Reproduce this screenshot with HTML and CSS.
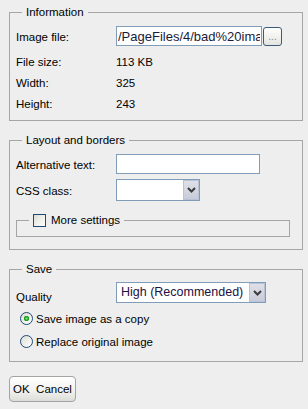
FILE: index.html
```html
<!DOCTYPE html>
<html lang="en">
  <head>
    <meta charset="UTF-8" />
    <meta name="viewport" content="width=device-width, initial-scale=1.0" />
    <title>Image properties</title>
    <link rel="stylesheet" href="styles.css">
  </head>
  <body>
    <div class="dialog">
      <fieldset class="group group-info">
        <legend>Information</legend>
        <div class="row row-control">
          <label class="label">Image file:</label>
          <div class="file-field">
            <input type="text" class="text-input file-input" value="/PageFiles/4/bad%20image.jpg" />
            <button class="browse-btn">...</button>
          </div>
        </div>
        <div class="info-list">
          <div class="row row-info"><span class="label">File size:</span><span class="value">113 KB</span></div>
          <div class="row row-info"><span class="label">Width:</span><span class="value">325</span></div>
          <div class="row row-info"><span class="label">Height:</span><span class="value">243</span></div>
        </div>
      </fieldset>

      <fieldset class="group group-layout">
        <legend>Layout and borders</legend>
        <div class="row row-control">
          <label class="label">Alternative text:</label>
          <input type="text" class="text-input alt-input" />
        </div>
        <div class="row row-control row-css">
          <label class="label">CSS class:</label>
          <div class="combo combo-css">
            <span class="combo-value"></span>
            <span class="combo-arrow">
              <svg width="9" height="6" viewBox="0 0 9 6"><path d="M1 1 L4.5 4.5 L8 1" fill="none" stroke="#3b3b3b" stroke-width="2" /></svg>
            </span>
          </div>
        </div>
        <fieldset class="subgroup">
          <legend class="check-legend">
            <input type="checkbox" class="check" />
            <span>More settings</span>
          </legend>
        </fieldset>
      </fieldset>

      <fieldset class="group group-save">
        <legend>Save</legend>
        <div class="row row-quality">
          <label class="label label-low">Quality</label>
          <div class="combo combo-quality">
            <span class="combo-value">High (Recommended)</span>
            <span class="combo-arrow">
              <svg width="9" height="6" viewBox="0 0 9 6"><path d="M1 1 L4.5 4.5 L8 1" fill="none" stroke="#3b3b3b" stroke-width="2" /></svg>
            </span>
          </div>
        </div>
        <div class="radio-list">
          <label class="radio-row"><input type="radio" name="save" class="radio" checked /><span>Save image as a copy</span></label>
          <label class="radio-row"><input type="radio" name="save" class="radio" /><span>Replace original image</span></label>
        </div>
      </fieldset>

      <button class="action-btn">OK&nbsp; Cancel</button>
    </div>
  </body>
</html>
```

FILE: styles.css
```css
body {
  margin: 0;
  padding: 0;
  background-color: #eeeeee;
  font-family: "Liberation Sans", Arial, sans-serif;
  font-size: 11.5px;
  color: #000;
}
.dialog {
  padding: 6px 5px 0 9px;
}
.group {
  margin: 0;
  border: 1px solid #a5a5a5;
  padding: 6px 6px 6px 6px;
  min-width: 0;
}
.group + .group {
  margin-top: 13px;
}
.group legend {
  padding: 0 4px;
  margin-left: 6px;
  line-height: 13px;
}
.row {
  display: grid;
  grid-template-columns: 100px auto;
  align-items: center;
}
.row-control {
  height: 22px;
}
.row-control + .row-control {
  margin-top: 4px;
}
.info-list {
  margin-top: 4px;
}
.row-info {
  height: 21px;
}
.label {
  line-height: 13px;
  padding-top: 2px;
}
.text-input {
  box-sizing: border-box;
  height: 20px;
  border: 1px solid #7f9db9;
  padding: 0 1px;
  margin: 0;
  background: #fff;
  font-family: "Liberation Sans", Arial, sans-serif;
  font-size: 13px;
  color: #1a1a3a;
  outline: none;
}
.file-field {
  display: flex;
  align-items: center;
  gap: 1px;
}
.file-input {
  width: 146px;
}
.alt-input {
  width: 144px;
}
.browse-btn {
  box-sizing: border-box;
  width: 19px;
  height: 19px;
  margin: 0;
  padding: 0 0 3px;
  border: 1px solid #3d5a7a;
  border-radius: 3px;
  background: linear-gradient(#ffffff, #e4e4e0);
  color: #8a8a8a;
  font-family: "Liberation Sans", Arial, sans-serif;
  font-size: 10px;
  line-height: 10px;
  display: flex;
  align-items: flex-end;
  justify-content: center;
}
.combo {
  box-sizing: border-box;
  display: flex;
  border: 1px solid #7f9db9;
  background: #fff;
}
.combo-css {
  width: 84px;
  height: 22px;
}
.combo-quality {
  width: 150px;
  height: 21px;
}
.combo-value {
  flex: 1;
  padding-left: 4px;
  font-size: 12.5px;
  line-height: 19px;
  color: #1c1040;
  white-space: nowrap;
  overflow: hidden;
}
.combo-arrow {
  box-sizing: border-box;
  width: 16px;
  border: 1px solid #b9c3d8;
  background: linear-gradient(#dfe0e8, #c8cbd8);
  display: flex;
  align-items: center;
  justify-content: center;
}
.subgroup {
  margin: 13px 6px 6px 0;
  border: 1px solid #a5a5a5;
  padding: 0 6px 9px;
  min-width: 0;
}
.check-legend {
  display: flex;
  align-items: center;
  gap: 5px;
  margin-left: 10px;
  padding: 0 4px;
  line-height: 13px;
}
.check {
  appearance: none;
  box-sizing: border-box;
  width: 13px;
  height: 13px;
  margin: 0;
  border: 1px solid #1f4a78;
  background: linear-gradient(135deg, #dcdcd6, #ffffff);
}
.group-save {
  padding-bottom: 8px;
}
.row-quality {
  height: 21px;
  align-items: end;
}
.label-low {
  padding-top: 0;
  margin-bottom: -1px;
}
.radio-list {
  margin-top: 4px;
}
.radio-row {
  display: flex;
  align-items: center;
  gap: 3px;
  height: 23px;
  padding-left: 4px;
}
.radio {
  appearance: none;
  box-sizing: border-box;
  width: 13px;
  height: 13px;
  margin: 0;
  border: 1px solid #1f4a78;
  border-radius: 50%;
  background: linear-gradient(135deg, #dcdcd6, #ffffff);
}
.radio:checked {
  background: radial-gradient(circle, #7ee07e 0, #21a121 2px, #2aa32a 2.5px, transparent 3px), linear-gradient(135deg, #dcdcd6, #ffffff);
}
.action-btn {
  box-sizing: border-box;
  display: block;
  margin-top: 14px;
  width: 67px;
  height: 26px;
  padding: 0;
  border: 1px solid #a3a3a3;
  border-radius: 4px;
  background: linear-gradient(#ffffff, #f0f0ee 60%, #dcdcd8);
  font-family: "Liberation Sans", Arial, sans-serif;
  font-size: 11.5px;
  color: #000;
}
```
